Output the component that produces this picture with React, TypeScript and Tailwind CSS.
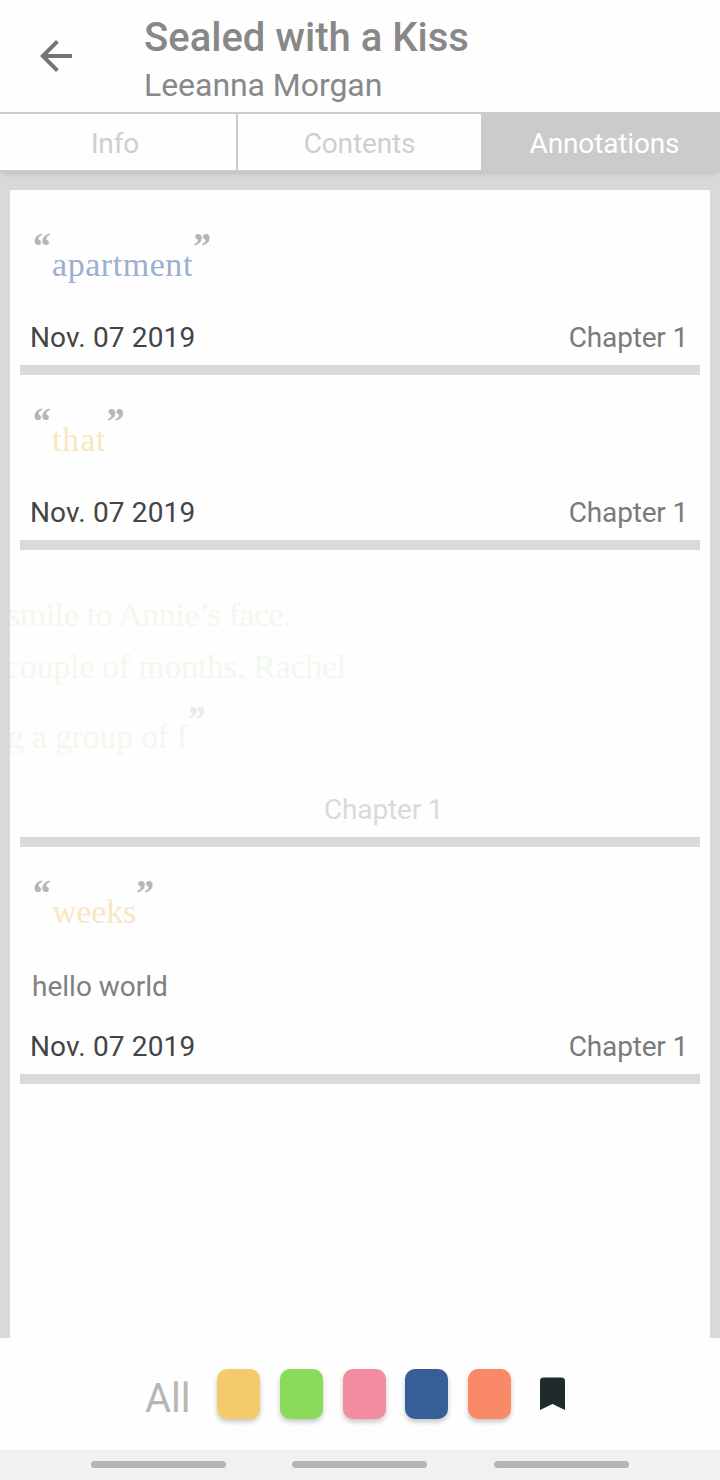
import React from "react";

type QuoteProps = { text: string; color: string; spacing: string };

const Mark = ({ children, className }: { children: string; className: string }) => (
  <span className={`block w-[17px] shrink-0 font-['Liberation_Serif',serif] text-[38px] font-bold italic leading-[30px] ${className}`}>
    {children}
  </span>
);

const Quote = ({ text, color, spacing }: QuoteProps) => (
  <div className="flex h-[112px] items-start pl-[15px]">
    <Mark className="mt-[31px] -indent-[4px] text-[#b6b6b4]">“</Mark>
    <span className={`mt-[45px] whitespace-nowrap font-['Liberation_Serif',serif] text-[34px] leading-[40px] ${color} ${spacing}`}>
      {text}
    </span>
    <Mark className="mt-[31px] -indent-[2px] text-[#b6b6b4]">”</Mark>
  </div>
);

const Footer = () => (
  <div className="flex h-[53px] justify-between pl-[10px] pr-[12px] pt-[8px] text-[28px] leading-[36px]">
    <span className="tracking-[0.15px] text-[#444]">Nov. 07 2019</span>
    <span className="tracking-[-0.18px] text-[#7a7a7a]">Chapter 1</span>
  </div>
);

const Rule = () => <div className="h-[10px] bg-[#dadada]" />;

const Swatch = ({ color }: { color: string }) => (
  <div className={`h-[50px] w-[43px] rounded-[10px] shadow-[0_3px_5px_rgba(0,0,0,0.22)] ${color}`} />
);

const Pill = () => <div className="h-[7px] w-[135px] rounded-full bg-[#b5b5b5]" />;

export default function App() {
  return (
    <div className="flex h-[1480px] w-[720px] flex-col overflow-hidden bg-[#d9d9d9] font-[Roboto,sans-serif]">
      <header className="flex h-[112px] shrink-0 bg-[#fefefe]">
        <svg viewBox="0 0 24 24" className="ml-8 mt-8 h-12 w-12" fill="#757575">
          <path d="M20 11H7.83l5.59-5.59L12 4l-8 8 8 8 1.41-1.41L7.83 13H20v-2z" />
        </svg>
        <div className="ml-16 pt-[14px]">
          <h1 className="text-[40px] font-medium leading-[48px] text-[#888]">Sealed with a Kiss</h1>
          <p className="-mt-px text-[32px] leading-[48px] tracking-[-0.05px] text-[#888]">Leeanna Morgan</p>
        </div>
      </header>

      <nav className="relative flex h-[60px] shrink-0 border-y-2 border-[#cbcbcb] bg-[#fefefe] text-[28px] leading-[59px] tracking-[-0.15px] text-[#cfcfcf] shadow-[0_5px_5px_-3px_rgba(0,0,0,0.12)]">
        <div className="w-[238px] border-r-2 border-[#cbcbcb] pr-[6px] text-center">Info</div>
        <div className="w-[243px] text-center">Contents</div>
        <div className="w-[239px] bg-[#cbcbcb] pl-[8px] text-center text-white">Annotations</div>
      </nav>

      <main className="mx-[10px] mt-[18px] h-[1148px] shrink-0 overflow-hidden bg-[#fefefe] px-[10px]">
        <section className="pt-[10px]">
          <Quote text="apartment" color="text-[#9cafcf]" spacing="tracking-[0.55px]" />
          <Footer />
          <Rule />
        </section>
        <section>
          <Quote text="that" color="text-[#f8e7bf]" spacing="tracking-[0.85px]" />
          <Footer />
          <Rule />
        </section>
        <section>
          <div className="-ml-[13px] flex h-[234px] flex-col items-start whitespace-nowrap pt-[39px] font-['Liberation_Serif',serif] text-[34px] leading-[52px] text-[#f1f9ec]">
            <p className="tracking-[-0.46px]">smile to Annie’s face.</p>
            <p className="-ml-[2px] tracking-[-0.27px]">couple of months, Rachel</p>
            <div className="flex items-start">
              <p className="mt-[18px] tracking-[-0.3px]">g a group of f</p>
              <Mark className="mt-[11px] -indent-[2px] text-[#ebebeb]">”</Mark>
            </div>
          </div>
          <div className="h-[53px] pl-[304px] pt-[8px] text-[28px] leading-[36px] tracking-[-0.15px] text-[#dadada]">Chapter 1</div>
          <Rule />
        </section>
        <section>
          <Quote text="weeks" color="text-[#f8e7bf]" spacing="tracking-[-0.2px]" />
          <p className="h-[62px] pl-[12px] pt-[10px] text-[28px] leading-[36px] text-[#808080]">hello world</p>
          <Footer />
          <Rule />
        </section>
      </main>

      <div className="flex h-[112px] shrink-0 items-start bg-[#fefefe] pl-[145px] pt-[31px]">
        <span className="mt-[6px] w-[72px] text-[40px] leading-[48px] text-[#b6b6b4]">All</span>
        <div className="flex gap-[19.75px]">
          <Swatch color="bg-[#f3cb6d]" />
          <Swatch color="bg-[#8adb5a]" />
          <Swatch color="bg-[#f28c9e]" />
          <Swatch color="bg-[#375e96]" />
          <Swatch color="bg-[#f98967]" />
        </div>
        <svg viewBox="0 0 25 33" className="ml-[29px] mt-[8px] h-[33px] w-[25px]" fill="#212a2b">
          <path d="M0 4Q0 .5 3.5 .5H21.5Q25 .5 25 4V33L12.5 27 0 33Z" />
        </svg>
      </div>
      <div className="flex h-[30px] shrink-0 items-start gap-[66.4px] bg-[#f1f1f1] pl-[91px] pt-[11px]">
        <Pill />
        <Pill />
        <Pill />
      </div>
    </div>
  );
}
